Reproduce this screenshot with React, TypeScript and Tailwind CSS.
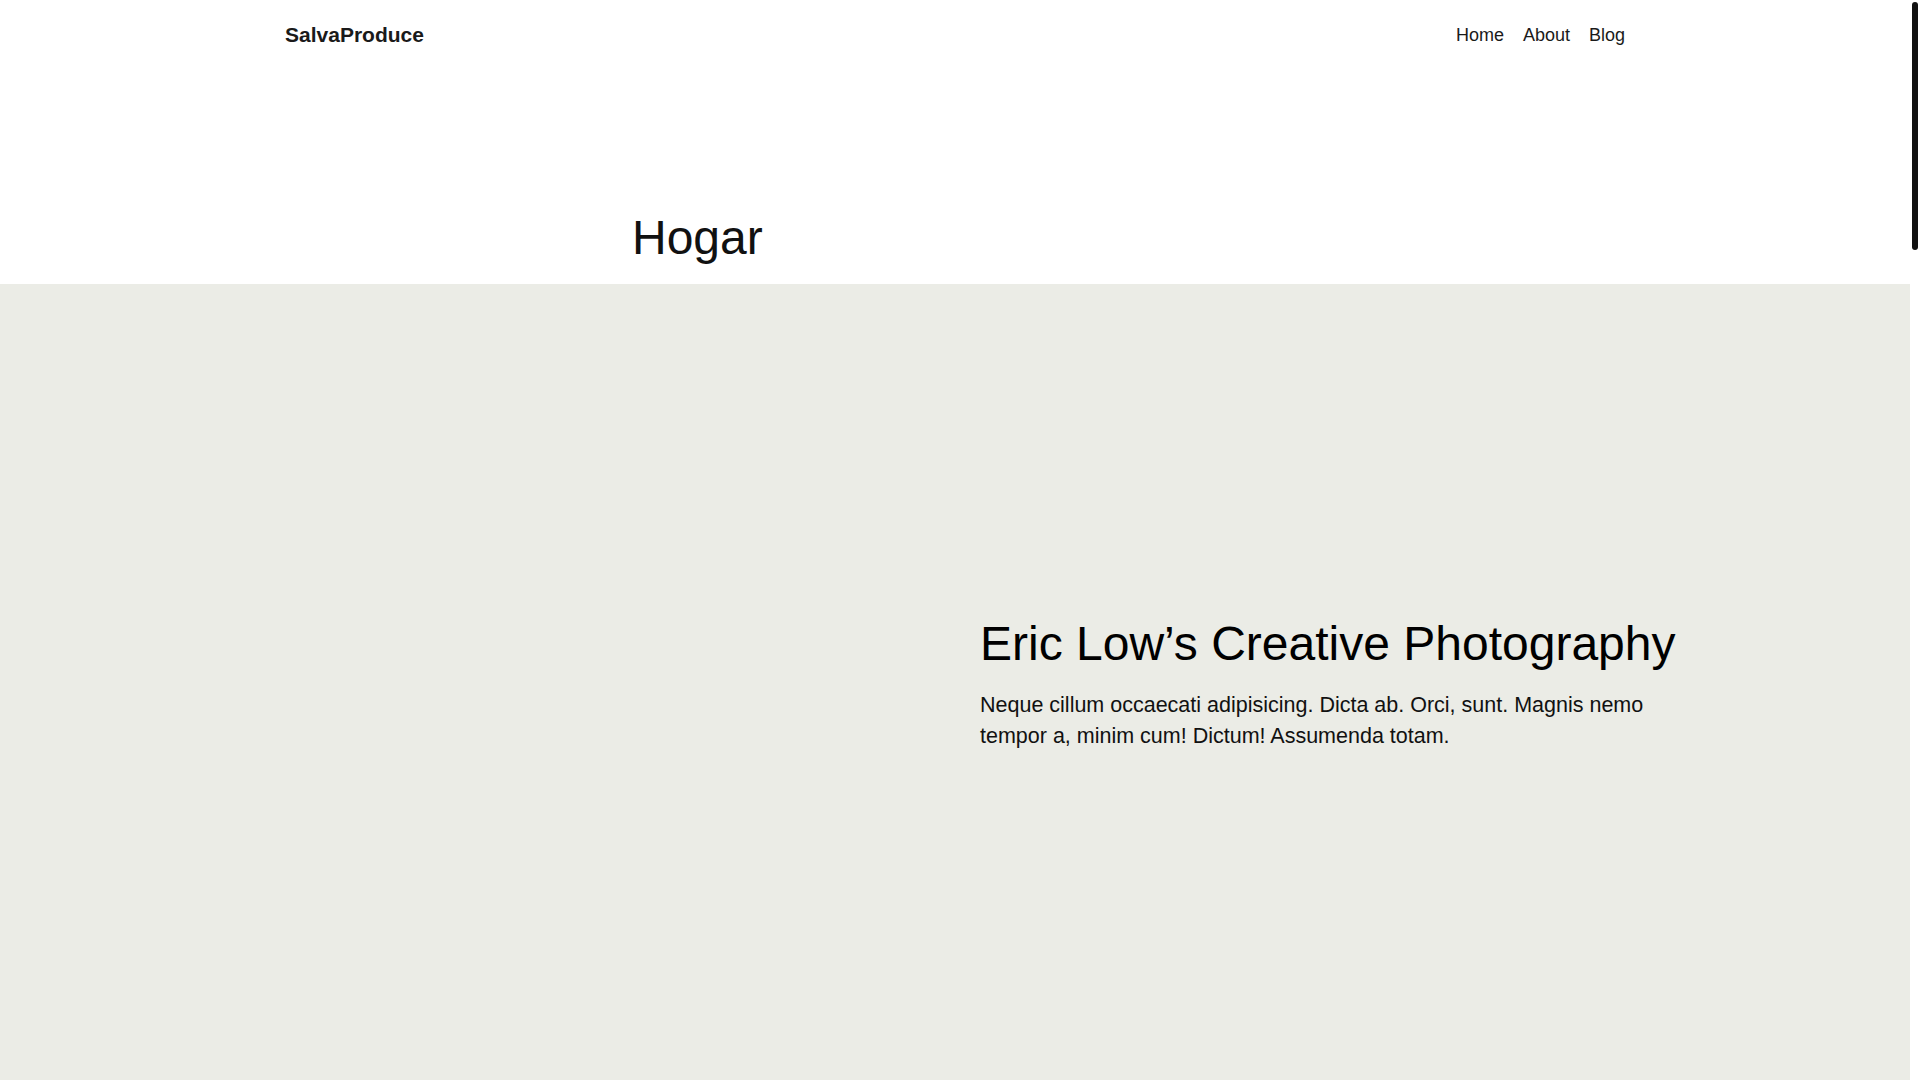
import React from "react";

export default function App() {
  return (
    <div className="flex h-screen overflow-hidden bg-white font-['Liberation_Sans',Arial,sans-serif] text-[#111]">
      <main className="min-w-0 flex-1 overflow-hidden">
        <header className="mx-auto flex max-w-[1340px] items-start justify-between pt-[23px]">
          <a href="#" className="text-[21px] font-bold leading-[24px] text-[#1a1a1a]">
            SalvaProduce
          </a>
          <nav className="flex gap-[19px] text-[18px] leading-[24px] text-[#1a1a1a]">
            <a href="#">Home</a>
            <a href="#">About</a>
            <a href="#">Blog</a>
          </nav>
        </header>

        <div className="mx-auto mt-[163px] mb-[19px] max-w-[646px]">
          <h1 className="text-[48px] leading-[55px] font-normal">Hogar</h1>
        </div>

        <section className="grid h-[1000px] grid-cols-2 bg-[#ebece6] pt-[331px]">
          <div />
          <div className="pl-[25px]">
            <div className="max-w-[710px]">
              <h2 className="text-[48px] leading-[57px] font-normal text-black">
                Eric Low’s Creative Photography
              </h2>
              <p className="mt-[17.5px] text-[21.5px] leading-[31.5px] text-[#111]">
                Neque cillum occaecati adipisicing. Dicta ab. Orci, sunt. Magnis nemo tempor a, minim cum! Dictum! Assumenda totam.
              </p>
            </div>
          </div>
        </section>
      </main>

      <aside className="flex w-[10px] shrink-0 justify-center bg-white pt-[2px]">
        <div className="h-[248px] w-[6px] rounded-full bg-[#111]" />
      </aside>
    </div>
  );
}
